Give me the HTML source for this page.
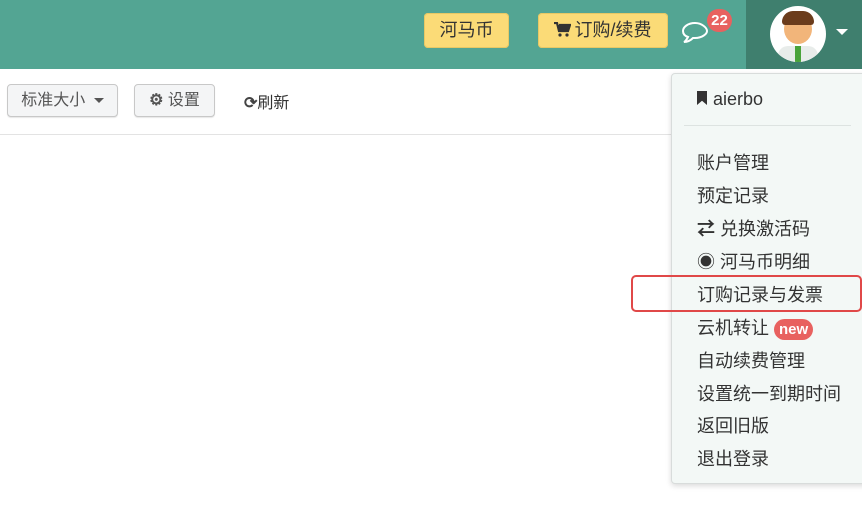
<!DOCTYPE html>
<html><head><meta charset="utf-8"><style>
body{margin:0;width:862px;height:506px;overflow:hidden;background:#fff;font-family:"Liberation Sans","Noto Sans CJK SC",sans-serif;position:relative}
.hdr{position:absolute;left:0;top:0;width:862px;height:69px;background:#53a593}
.hdr .dark{position:absolute;left:746px;top:0;width:116px;height:69px;background:#3f7f6e}
.yb{position:absolute;top:13px;height:35px;background:#fbdb77;border-radius:4px;color:#333;font-size:18px;line-height:35px;text-align:center;box-shadow:0 0 0 1px #e8c864 inset}
.btn{position:absolute;top:84px;height:33px;border:1px solid #c8c8c8;border-radius:4px;background:#f4f5f6;color:#555;font-size:16px;line-height:31px;text-align:center;box-sizing:border-box;box-shadow:0 1px 1px rgba(0,0,0,.1)}
.line{position:absolute;left:0;top:134px;width:672px;height:1px;background:#e3e3e3}
.dd{position:absolute;left:671px;top:73px;width:200px;height:409px;background:#f3f8f6;border:1px solid #d8dcdb;border-radius:4px;box-shadow:0 2px 6px rgba(0,0,0,.15)}
.it{position:absolute;left:697px;font-size:18px;color:#333;line-height:24px}
</style></head><body>
<div class="hdr"><div class="dark"></div></div>
<div class="yb" style="left:424px;width:85px">河马币</div>
<div class="yb" style="left:538px;width:130px"><svg width="17" height="15" viewBox="0 0 17 15" style="vertical-align:-1px;margin-right:3px"><path d="M0 1h3l2 8h9l2-6H5" fill="none" stroke="#333" stroke-width="2.2"/><rect x="4" y="3" width="11" height="5" fill="#333"/><circle cx="6" cy="13" r="1.6" fill="#333"/><circle cx="13" cy="13" r="1.6" fill="#333"/></svg>订购/续费</div>
<svg style="position:absolute;left:681px;top:20px" width="30" height="24" viewBox="0 0 30 24"><path d="M14 3C7 3 2 7 2 11c0 3 2 5 5 6-1 2-2 4-4 5 4 0 7-2 9-4h2c7 0 12-4 12-7S21 3 14 3z" fill="none" stroke="#fff" stroke-width="2"/></svg>
<div style="position:absolute;left:707px;top:9px;width:25px;height:23px;border-radius:12px;background:#e8615f;color:#fff;font-size:15px;font-weight:bold;line-height:23px;text-align:center">22</div>
<div style="position:absolute;left:770px;top:6px;width:56px;height:56px;border-radius:50%;background:#fff;overflow:hidden">
<div style="position:absolute;left:14px;top:8px;width:28px;height:30px;border-radius:50%;background:#f2b57a"></div>
<div style="position:absolute;left:12px;top:5px;width:32px;height:14px;border-radius:14px 14px 4px 4px;background:#6b3c1c"></div>
<div style="position:absolute;left:8px;top:40px;width:40px;height:20px;border-radius:10px 10px 0 0;background:#e8ecea"></div>
<div style="position:absolute;left:25px;top:40px;width:6px;height:16px;background:#4aa33a"></div></div>
<div style="position:absolute;left:836px;top:29px;border-left:6px solid transparent;border-right:6px solid transparent;border-top:6px solid #fff"></div>
<div class="btn" style="left:7px;width:111px">标准大小 <span style="display:inline-block;border-left:5px solid transparent;border-right:5px solid transparent;border-top:5px solid #555;vertical-align:middle;margin-left:4px"></span></div>
<div class="btn" style="left:134px;width:81px"><b>⚙</b> 设置</div>
<div style="position:absolute;left:244px;top:89px;font-size:16px;color:#333"><b style="color:#444">⟳</b>刷新</div>
<div class="line"></div>
<div class="dd"></div>
<div class="it" style="top:87px"><span style="display:inline-block;width:10px;height:14px;background:#333;clip-path:polygon(0 0,100% 0,100% 100%,50% 70%,0 100%);margin-right:6px"></span>aierbo</div>
<div style="position:absolute;left:684px;top:125px;width:167px;height:1px;background:#dde3e1"></div>
<div class="it" style="top:151px">账户管理</div>
<div class="it" style="top:184px">预定记录</div>
<div class="it" style="top:217px"><b>⇄</b> 兑换激活码</div>
<div class="it" style="top:250px">◉ 河马币明细</div>
<div class="it" style="top:283px">订购记录与发票</div>
<div class="it" style="top:316px">云机转让 <span style="display:inline-block;background:#e8615f;color:#fff;font-size:15px;font-weight:bold;border-radius:11px;padding:0 5px;line-height:21px">new</span></div>
<div class="it" style="top:349px">自动续费管理</div>
<div class="it" style="top:382px">设置统一到期时间</div>
<div class="it" style="top:414px">返回旧版</div>
<div class="it" style="top:447px">退出登录</div>
<div style="position:absolute;left:631px;top:275px;width:227px;height:33px;border:2px solid #e04848;border-radius:5px"></div>
</body></html>
